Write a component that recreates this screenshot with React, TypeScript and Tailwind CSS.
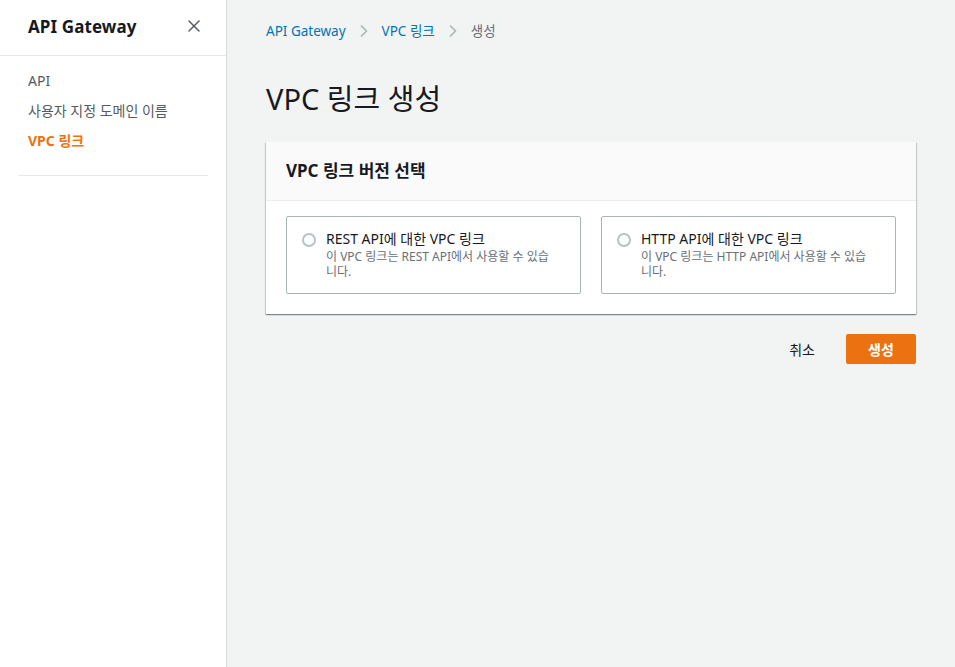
import { X, ChevronRight } from "lucide-react";

const font = { fontFamily: '"Noto Sans", "Noto Sans CJK KR", sans-serif' };

function Sidebar() {
  return (
    <div className="w-[227px] shrink-0 bg-white border-r border-[#d5dbdb] min-h-screen">
      <div className="h-[56px] flex items-center justify-between pl-[28px] pr-[22px] border-b border-[#e5e7e8]">
        <span className="text-[17px] font-bold text-[#16191f] tracking-[0.1px] -mt-[2px]">API Gateway</span>
        <X size={20} strokeWidth={1.8} className="text-[#545b64] -mt-[4px]" />
      </div>
      <div className="flex flex-col px-[28px] pt-[10px] text-[14px] text-[#545b64] leading-[30px]">
        <span>API</span>
        <span>사용자 지정 도메인 이름</span>
        <span className="font-bold text-[#ec7211]">VPC 링크</span>
      </div>
      <div className="mx-[18px] mt-[19px] border-t border-[#e5e7e8]" />
    </div>
  );
}

function Tile({ title, desc }: { title: string; desc: string }) {
  return (
    <div className="flex-1 border border-[#aab7b8] rounded-[2px] px-[15px] pt-[12px] pb-[14px] flex gap-[10px]">
      <div className="mt-[4px] w-[14px] h-[14px] rounded-full border-2 border-[#b8c2c3] shrink-0" />
      <div className="flex flex-col max-w-[232px]">
        <span className="text-[14px] text-[#16191f] leading-[20px]">{title}</span>
        <span className="text-[12px] text-[#687078] leading-[15px]">{desc}</span>
      </div>
    </div>
  );
}

export default function App() {
  return (
    <div className="flex w-full min-h-screen bg-[#f2f3f3]" style={font}>
      <Sidebar />
      <div className="flex-1 pl-[39px] pr-[39px]">
        <div className="flex items-center gap-[8px] mt-[20px] h-[22px] text-[13.5px]">
          <span className="text-[#0073bb]">API Gateway</span>
          <ChevronRight size={20} strokeWidth={2} className="text-[#aab7b8]" />
          <span className="text-[#0073bb]">VPC 링크</span>
          <ChevronRight size={20} strokeWidth={2} className="text-[#aab7b8]" />
          <span className="text-[#687078]">생성</span>
        </div>
        <h1 className="mt-[37px] text-[29px] leading-[40px] text-[#16191f]">VPC 링크 생성</h1>
        <div className="mt-[23px] bg-white shadow-[0_1px_1px_0_rgba(0,28,36,0.3),1px_1px_1px_0_rgba(0,28,36,0.15),-1px_1px_1px_0_rgba(0,28,36,0.15)]">
          <div className="h-[59px] bg-[#fafafa] border-b border-[#eaeded] flex items-center px-[20px]">
            <span className="text-[17px] font-bold text-[#16191f]">VPC 링크 버전 선택</span>
          </div>
          <div className="flex gap-[20px] px-[20px] pt-[15px] pb-[20px]">
            <Tile title="REST API에 대한 VPC 링크" desc="이 VPC 링크는 REST API에서 사용할 수 있습니다." />
            <Tile title="HTTP API에 대한 VPC 링크" desc="이 VPC 링크는 HTTP API에서 사용할 수 있습니다." />
          </div>
        </div>
        <div className="flex justify-end items-center gap-[31px] mt-[20px]">
          <span className="text-[14px] font-normal text-[#16191f]">취소</span>
          <button className="w-[70px] h-[30px] bg-[#ec7211] rounded-[2px] text-white text-[14px] font-bold">생성</button>
        </div>
      </div>
    </div>
  );
}
